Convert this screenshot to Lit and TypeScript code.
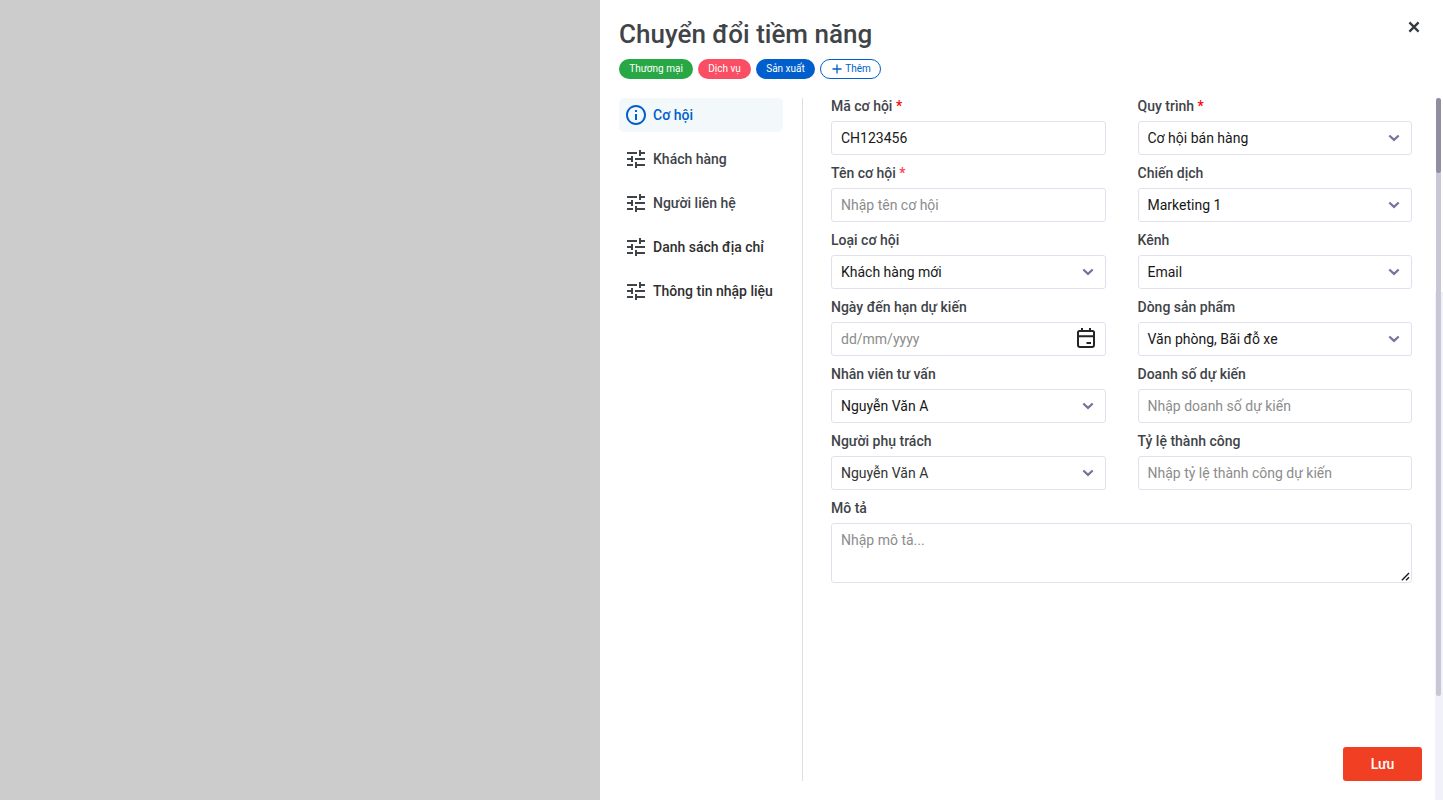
import { LitElement, html, css, svg, nothing } from "lit";
import { customElement } from "lit/decorators.js";

interface Field {
  label: string;
  kind: "text" | "select" | "date" | "area";
  value?: string;
  hint?: string;
  required?: "strong" | "soft";
  dim?: boolean;
}

const FIELDS: Field[] = [
  { label: "Mã cơ hội", kind: "text", value: "CH123456", required: "strong" },
  { label: "Quy trình", kind: "select", value: "Cơ hội bán hàng", required: "strong" },
  { label: "Tên cơ hội", kind: "text", hint: "Nhập tên cơ hội", required: "soft" },
  { label: "Chiến dịch", kind: "select", value: "Marketing 1" },
  { label: "Loại cơ hội", kind: "select", value: "Khách hàng mới" },
  { label: "Kênh", kind: "select", value: "Email" },
  { label: "Ngày đến hạn dự kiến", kind: "date", hint: "dd/mm/yyyy" },
  { label: "Dòng sản phẩm", kind: "select", value: "Văn phòng, Bãi đỗ xe" },
  { label: "Nhân viên tư vấn", kind: "select", value: "Nguyễn Văn A" },
  { label: "Doanh số dự kiến", kind: "text", hint: "Nhập doanh số dự kiến" },
  { label: "Người phụ trách", kind: "select", value: "Nguyễn Văn A", dim: true },
  { label: "Tỷ lệ thành công", kind: "text", hint: "Nhập tỷ lệ thành công dự kiến" },
  { label: "Mô tả", kind: "area", hint: "Nhập mô tả..." },
];

const chevron = html`<svg class="chevron" width="12" height="8" viewBox="0 0 12 8">
  <path d="M1.300 1.500 6 5.900l4.700-4.400" fill="none" stroke="#75759a" stroke-width="2.200" />
</svg>`;

const calendar = html`<svg class="calendar" width="20" height="22" viewBox="0 0 20 22">
  <path d="M3.500 4h13a1.500 1.500 0 0 1 1.500 1.500v12.500a2 2 0 0 1-2 2H4a2 2 0 0 1-2-2V5.500A1.500 1.500 0 0 1 3.500 4zM2 9.200h16M6 1v3M14 1v3M10.500 16h4.500" fill="none" stroke="#252525" stroke-width="2" />
</svg>`;

const sliders = svg`<path d="M3 17v2h6v-2H3zM3 5v2h10V5H3zm10 16v-2h8v-2h-8v-2h-2v6h2zM7 9v2H3v2h4v2h2V9H7zm14 4v-2H11v2h10zm-6-4h2V7h4V5h-4V3h-2v6z" />`;
const info = svg`<path d="M11 7h2v2h-2zm0 4h2v6h-2zm1-9C6.480 2 2 6.480 2 12s4.480 10 10 10 10-4.480 10-10S17.520 2 12 2zm0 18c-4.410 0-8-3.590-8-8s3.590-8 8-8 8 3.590 8 8-3.590 8-8 8z" />`;

@customElement("app-root")
export class AppRoot extends LitElement {
  static styles = css`
    :host {
      display: flex;
      justify-content: flex-end;
      height: 800px;
      background: #ccc;
      font-family: Roboto, sans-serif;
      font-size: 14px;
      line-height: 20px;
      color: #3f4449;
    }
    * { box-sizing: border-box; }
    .panel {
      display: flex;
      flex-direction: column;
      width: 843px;
      height: 800px;
      background: #fff;
      padding: 18px 0 19px 19px;
    }
    .head { display: flex; height: 80px; justify-content: space-between; }
    .title { margin: 0; font-size: 26px; line-height: 32px; font-weight: 500; }
    .close { margin: 3px 23px 0 0; }
    .tags { display: flex; gap: 5px; margin-top: 9px; font-size: 10px; line-height: 20px; }
    .tag { display: flex; align-items: center; justify-content: center; height: 20px; border-radius: 10px; color: #fff; }
    .green { width: 74px; background: #28a745; }
    .pink { width: 53px; background: #f94e63; }
    .blue { width: 59px; background: #005fcc; }
    .add { width: 61px; border: 1px solid #005fcc; color: #005fcc; padding-left: 2px; gap: 3px; background: #fff; }
    .body { display: flex; flex: 1; min-height: 0; }
    .nav { display: flex; flex-direction: column; gap: 10px; width: 184px; padding-right: 19px; border-right: 1px solid #dddfe3; }
    .item { display: flex; align-items: center; gap: 5px; height: 34px; padding-left: 5px; border-radius: 5px; font-weight: 500; }
    .item svg { fill: currentColor; }
    .item.active { background: #f3f8fb; color: #005fcc; }
    .item.dark span { color: #303030; }
    .content { display: flex; flex-direction: column; justify-content: space-between; width: 591px; margin-left: 28px; }
    .form { display: grid; grid-template-columns: 1fr 1fr; column-gap: 32px; row-gap: 8px; width: 581px; margin-top: -2px; }
    .field { display: flex; flex-direction: column; gap: 5px; }
    .wide { grid-column: 1 / -1; }
    .label { font-weight: 500; }
    .strong { color: #ff0000; }
    .soft { color: #ff3b55; }
    .box {
      display: flex;
      align-items: center;
      justify-content: space-between;
      height: 34px;
      border: 1px solid #e1e1ee;
      border-radius: 3px;
      padding: 0 11px 0 9px;
      color: #181818;
      background: #fff;
    }
    .box.date { padding: 0 9px; }
    .calendar { margin-bottom: 2px; }
    .box.area { height: 60px; align-items: flex-start; padding: 6px 1px 1px 9px; }
    .grip { align-self: flex-end; }
    .hint { color: #8c8c8c; }
    .dim { color: #333; }
    .save {
      align-self: flex-end;
      width: 79px;
      height: 34px;
      border: 0;
      border-radius: 3px;
      padding: 0;
      background: #f03f23;
      color: #fff;
      font: 500 14px/20px Roboto, sans-serif;
    }
    .gutter { width: 8px; margin: 0 0 -19px auto; padding-left: 1px; background: linear-gradient(#fff 194px, #f1f1fa 194px); }
    .track { width: 5px; height: 598px; border-radius: 3px; background: #c8c7d5; }
    .thumb { width: 5px; height: 75px; border-radius: 3px; background: #908f9f; }
  `;

  private control(f: Field) {
    const text = html`<span class=${f.hint ? "hint" : f.dim ? "dim" : "value"}>${f.value ?? f.hint}</span>`;
    return html`<div class="box ${f.kind}">
      ${text}
      ${f.kind === "select" ? chevron : nothing}
      ${f.kind === "date" ? calendar : nothing}
      ${f.kind === "area"
        ? html`<svg class="grip" width="9" height="9" viewBox="0 0 9 9"><path d="M.9 8.200 8 1M5 8.200 8 5.300" stroke="#181818" stroke-width="1.400" fill="none" /></svg>`
        : nothing}
    </div>`;
  }

  render() {
    const items = ["Cơ hội", "Khách hàng", "Người liên hệ", "Danh sách địa chỉ", "Thông tin nhập liệu"];
    return html`<section class="panel">
      <header class="head">
        <div>
          <h1 class="title">Chuyển đổi tiềm năng</h1>
          <div class="tags">
            <span class="tag green">Thương mại</span>
            <span class="tag pink">Dịch vụ</span>
            <span class="tag blue">Sản xuất</span>
            <span class="tag add"><svg width="10" height="10" viewBox="0 0 10 10"><path d="M5 .5v9M.5 5h9" stroke="#005fcc" stroke-width="1.300" /></svg>Thêm</span>
          </div>
        </div>
        <svg class="close" width="12" height="12" viewBox="0 0 12 12"><path d="m1.400 1.400 9.200 9.200M10.600 1.400l-9.200 9.200" stroke="#343a40" stroke-width="2.300" /></svg>
      </header>
      <div class="body">
        <nav class="nav">
          ${items.map((name, i) => html`<div class="item ${i === 0 ? "active" : i > 2 ? "dark" : ""}">
            <svg width="24" height="24" viewBox="0 0 24 24">${i === 0 ? info : sliders}</svg><span>${name}</span>
          </div>`)}
        </nav>
        <main class="content">
          <div class="form">
            ${FIELDS.map((f) => html`<div class="field ${f.kind === "area" ? "wide" : ""}">
              <span class="label">${f.label}${f.required ? html` <span class=${f.required}>*</span>` : nothing}</span>
              ${this.control(f)}
            </div>`)}
          </div>
          <button class="save">Lưu</button>
        </main>
        <div class="gutter"><div class="track"><div class="thumb"></div></div></div>
      </div>
    </section>`;
  }
}
